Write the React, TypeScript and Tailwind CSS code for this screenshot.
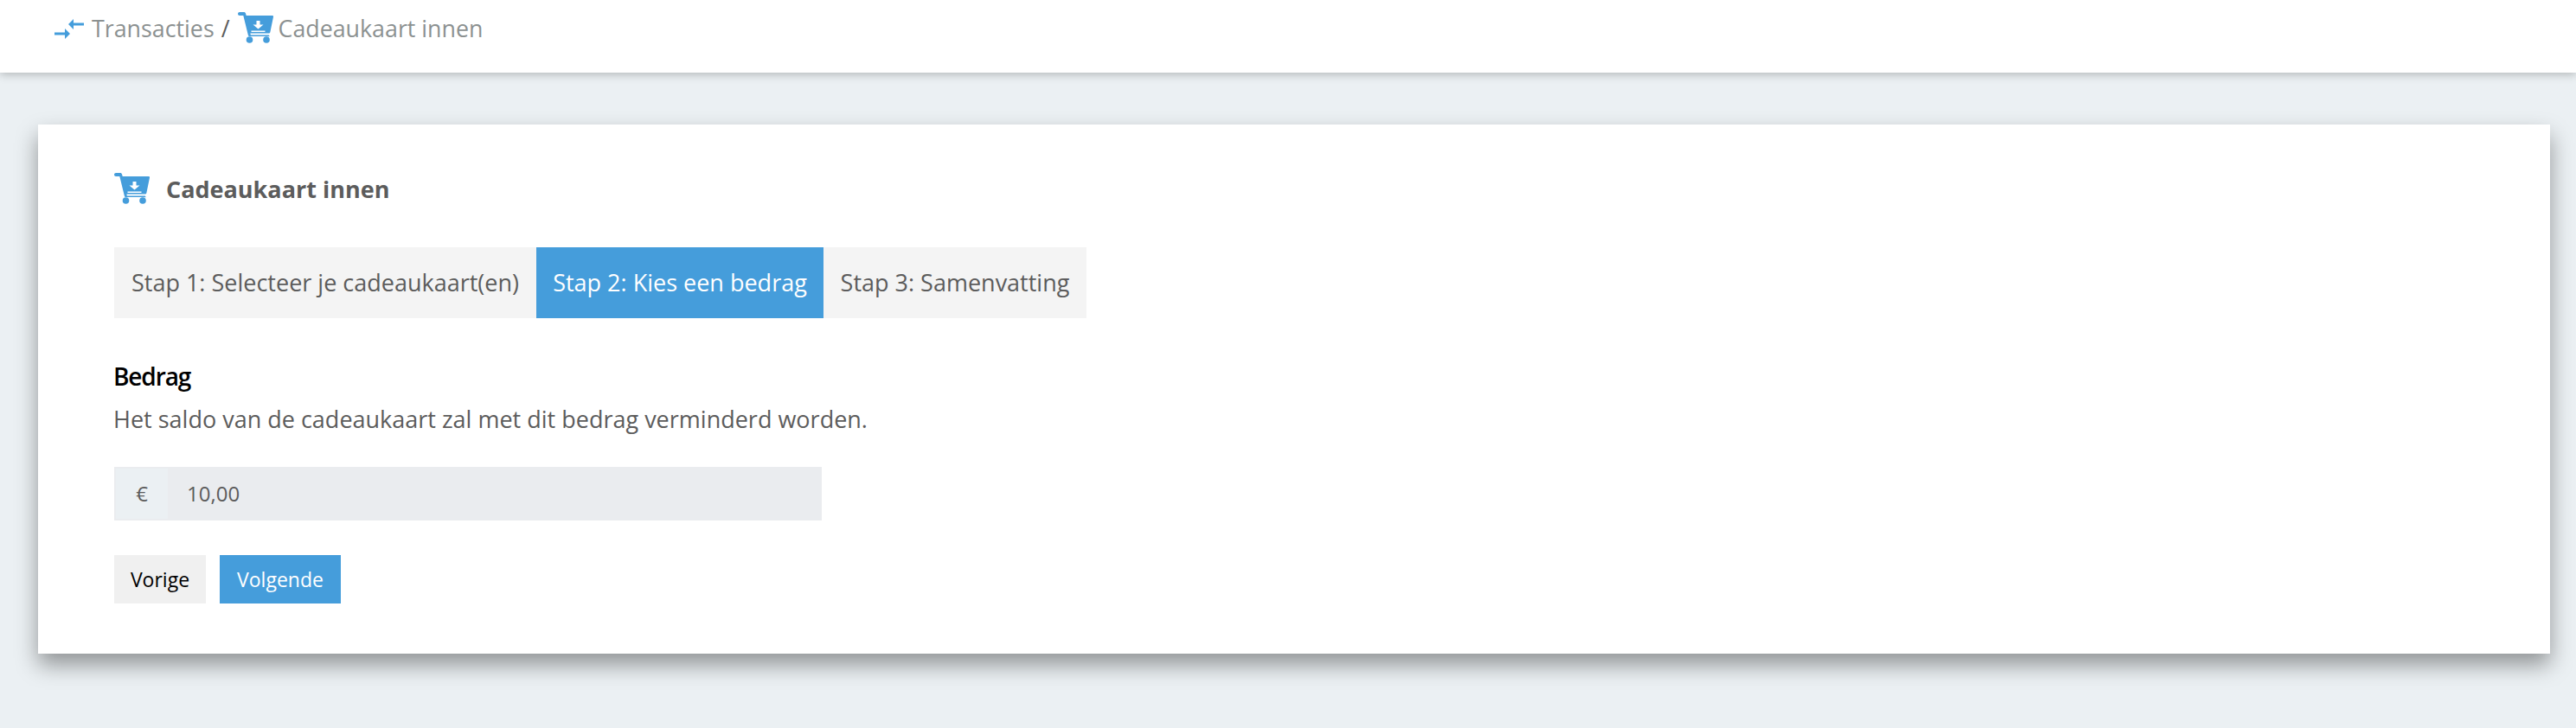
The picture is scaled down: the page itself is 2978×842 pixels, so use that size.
const CartIcon = ({ className }: { className: string }) => (
  <svg viewBox="0 0 41 36" className={className} fill="#459ddb">
    <path d="M0 2c0-1.100.9-2 2-2h5c1 0 1.800.6 2 1.600L9.700 4H40c.7 0 1.200.7 1 1.400l-3.600 17.500c-.2.9-.9 1.600-1.900 1.600H14.400l.4 2H35c.9 0 1.500.7 1.500 1.500S35.900 28 35 28H13.500c-.8 0-1.400-.5-1.600-1.300L6.300 4H2C.9 4 0 3.100 0 2z" />
    <circle cx="13.500" cy="32" r="3.800" />
    <circle cx="33" cy="32" r="3.800" />
    <path fill="#fff" d="M21.500 10h4v4.500h4L23.500 19.500 17.500 14.500h4zM15.500 21.500h16V23h-16z" />
  </svg>
)

const TransferIcon = ({ className }: { className: string }) => (
  <svg viewBox="0 0 34 23" className={className} fill="#459ddb">
    <path d="M16 6l6-6v4.500h12v3H22V12z" />
    <path d="M18 17l-6-6v4.500H0v3h12V23z" />
  </svg>
)

const steps = [
  { label: "Stap 1: Selecteer je cadeaukaart(en)", width: "w-[488px]", active: false },
  { label: "Stap 2: Kies een bedrag", width: "w-[332px]", active: true },
  { label: "Stap 3: Samenvatting", width: "w-[304px]", active: false },
]

const App = () => {
  return (
    <div className="min-h-[842px] bg-[#ebf0f3] font-['Open_Sans',sans-serif] text-[#5c5c5c]">
      {/* Breadcrumb */}
      <div className="relative flex h-[84px] items-start bg-white pl-[63px] pt-[15px] text-[26.8px] leading-[36px] shadow-[0_2px_10px_rgba(0,0,0,0.25)]">
        <TransferIcon className="mt-[7px] h-[23px] w-[34px]" />
        <span className="ml-[9px] text-[#8c9191]">Transacties</span>
        <span className="ml-[8px]">/</span>
        <CartIcon className="ml-[9px] -mt-[1px] h-[36px] w-[41px]" />
        <span className="ml-[6px] text-[#8c9191]">Cadeaukaart innen</span>
      </div>

      <div className="px-[30px] pt-[60px] pb-[86px]">
        <div className="ml-[14px] h-[612px] w-[2904px] bg-white pl-[88px] pt-[56px] shadow-[0_13px_24px_rgba(0,0,0,0.38)]">
          <div className="flex h-[36px] items-center">
            <CartIcon className="h-[36px] w-[41px]" />
            <h1 className="ml-[19px] mt-[2px] text-[27px] font-bold">Cadeaukaart innen</h1>
          </div>

          {/* Steps */}
          <div className="mt-[50px] flex">
            {steps.map((step) => (
              <div
                key={step.label}
                className={`flex h-[82px] items-center justify-center text-[27px] ${step.width} ${
                  step.active ? "bg-[#459ddb] text-white" : "bg-[#f4f4f4]"
                }`}
              >
                {step.label}
              </div>
            ))}
          </div>

          <div className="-ml-[1px] mt-[49px] text-[28px] font-semibold leading-[36px] tracking-[-0.04em] text-black">Bedrag</div>
          <p className="-ml-[1px] mt-[14px] text-[27px] leading-[36px]">
            Het saldo van de cadeaukaart zal met dit bedrag verminderd worden.
          </p>

          {/* Amount */}
          <div className="mt-[37px] flex h-[62px] w-[818px] border-2 border-[#eaecef] bg-[#eaecef]">
            <div className="flex w-[60px] items-center justify-center bg-[#ebf0f3] text-[24px]">€</div>
            <div className="flex items-center pl-[22px] text-[24px]">10,00</div>
          </div>

          <div className="mt-[40px] flex gap-[16px]">
            <button className="h-[56px] w-[106px] bg-[#f0f0f0] text-[23px] text-black">Vorige</button>
            <button className="h-[56px] w-[140px] bg-[#459ddb] text-[23px] text-white">Volgende</button>
          </div>
        </div>
      </div>
    </div>
  )
}

export default App
